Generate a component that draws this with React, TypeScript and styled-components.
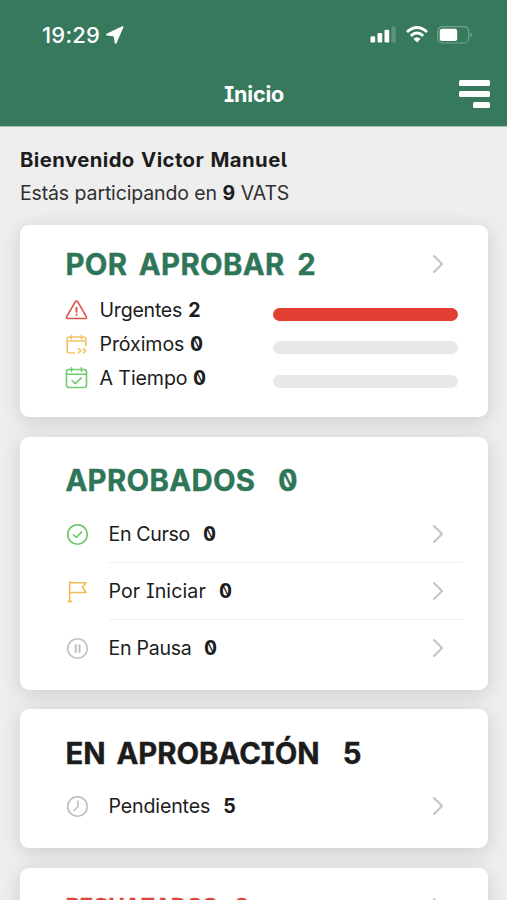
import React from 'react';
import styled, { createGlobalStyle } from 'styled-components';

const GlobalStyle = createGlobalStyle`
  * { box-sizing: border-box; }
  html, body { margin: 0; padding: 0; overflow: hidden; }
  body {
    background: #eeeeee;
    color: #1c1c1c;
    font-family: Inter, "Liberation Sans", sans-serif;
    -webkit-font-smoothing: antialiased;
  }
  svg { display: block; flex: none; }
`;

const Screen = styled.div`
  width: 507px;
  height: 900px;
  overflow: hidden;
  background: #eeeeee;
`;

const Header = styled.header`
  height: 127px;
  background: #37795c;
  color: #fff;
  border-bottom: 1px solid #a9c1b5;
`;

const StatusBar = styled.div`
  height: 68px;
  padding: 0 34px 0 42px;
  display: flex;
  align-items: center;
  justify-content: space-between;
`;

const Clock = styled.div`
  display: flex;
  align-items: center;
  gap: 6px;
  font-size: 22px;
  font-weight: 500;
  line-height: 24px;
  letter-spacing: 0.2px;
  padding-top: 1px;
`;

const Signals = styled.div`
  display: flex;
  align-items: center;
  gap: 9.5px;
  padding-top: 1px;
`;

const NavBar = styled.div`
  height: 58px;
  padding: 0 17px 7px 18px;
  display: grid;
  grid-template-columns: 1fr auto 1fr;
  align-items: center;
`;

const NavTitle = styled.h1`
  grid-column: 2;
  margin: 0;
  font-size: 21.5px;
  line-height: 26px;
  font-weight: 700;
  letter-spacing: -0.15px;
  font-feature-settings: "ss02";
`;

const MenuButton = styled.button`
  justify-self: end;
  padding: 1px 0 0;
  border: 0;
  background: none;
  display: flex;
  flex-direction: column;
  align-items: flex-end;
  gap: 5.4px;
`;

const MenuLine = styled.span<{ $w: number }>`
  width: ${(p) => p.$w}px;
  height: 5.6px;
  border-radius: 1.5px;
  background: #fff;
`;

const Content = styled.main`
  padding: 20px 19.5px 0 20px;
`;

const Greeting = styled.p<{ $bold?: boolean; $track: number; $word: number }>`
  margin: 0;
  padding-top: ${(p) => (p.$bold ? 0 : 1)}px;
  height: ${(p) => (p.$bold ? 32 : 46)}px;
  font-size: ${(p) => (p.$bold ? 20.3 : 19.5)}px;
  line-height: 26px;
  font-weight: ${(p) => (p.$bold ? 700 : 400)};
  letter-spacing: ${(p) => p.$track}px;
  word-spacing: ${(p) => p.$word}px;
  white-space: nowrap;
  font-feature-settings: "ss02";
  color: ${(p) => (p.$bold ? '#1c1c1c' : '#303030')};
  b { color: #1c1c1c; }
`;

const Cards = styled.div`
  display: flex;
  flex-direction: column;
  gap: 19.5px;
`;

const Card = styled.section<{ $h: number; $top: number }>`
  height: ${(p) => p.$h}px;
  padding: ${(p) => p.$top}px 25.5px 0 45px;
  border-radius: 9px;
  background: #fff;
  box-shadow: 0 4px 20px rgba(0, 0, 0, 0.14);
`;

const CardHead = styled.div`
  height: 36px;
  padding-right: 18px;
  display: flex;
  align-items: center;
`;

const CardTitle = styled.h2<{ $color: string; $track: number; $gap: number; $size?: number }>`
  margin: 0 auto 0 0.4px;
  padding-top: 1px;
  display: flex;
  gap: ${(p) => p.$gap}px;
  font-size: ${(p) => p.$size ?? 29.3}px;
  line-height: 36px;
  font-weight: 700;
  letter-spacing: ${(p) => p.$track}px;
  word-spacing: 4px;
  white-space: nowrap;
  color: ${(p) => p.$color};
  -webkit-text-stroke: 0.4px ${(p) => p.$color};
  font-feature-settings: "ss02";
`;

const Meter = styled.div`
  height: 33.8px;
  display: flex;
  align-items: center;
`;

const Meters = styled.div`
  padding-top: 11.5px;
  padding-right: 4px;
`;

const Label = styled.span<{ $left: number; $gap: number; $track: number }>`
  margin-left: ${(p) => p.$left}px;
  margin-right: auto;
  display: flex;
  gap: ${(p) => p.$gap}px;
  font-size: 19.6px;
  line-height: 26px;
  letter-spacing: ${(p) => p.$track}px;
  white-space: nowrap;
  font-feature-settings: "ss02";
  b { letter-spacing: 0; }
`;

const Zero = styled.b`
  display: inline-block;
  font-weight: 700;
  letter-spacing: 0;
  transform: scaleX(-0.98);
  transform-origin: center;
  font-feature-settings: "zero";
`;

const Track = styled.div`
  width: 185.5px;
  height: 13px;
  margin-top: 7.5px;
  border-radius: 7px;
  overflow: hidden;
  background: #e8e8e8;
`;

const Fill = styled.div`
  height: 100%;
  background: #e23f32;
`;

const List = styled.div`
  padding-top: 7px;
  display: flex;
  flex-direction: column;
`;

const Row = styled.div`
  height: 57px;
  padding-left: 1px;
  display: flex;
  align-items: center;
`;

const RowBody = styled.div<{ $line?: boolean }>`
  height: 57px;
  flex: 1;
  margin-left: 19.5px;
  padding-right: 18px;
  display: flex;
  align-items: center;
  border-bottom: 1.5px solid ${(p) => (p.$line ? '#efefef' : 'transparent')};
`;

const Chevron = () => (
  <svg width="12" height="20" viewBox="0 0 12 20" fill="none" stroke="#c4c4c4" strokeWidth="2" strokeLinecap="round" strokeLinejoin="round">
    <path d="M2 2L10 10L2 18" />
  </svg>
);

type IconName = 'alert' | 'next' | 'ontime' | 'check' | 'flag' | 'pause' | 'clock';

const iconColors: Record<IconName, string> = {
  alert: '#df5148',
  next: '#f3c365',
  ontime: '#72cb70',
  check: '#6cc667',
  flag: '#f0bd52',
  pause: '#c2c2c2',
  clock: '#bdbdbd',
};

const iconShapes: Record<IconName, React.ReactNode> = {
  alert: (
    <>
      <path d="M11 1.6Q11.8 1.6 12.3 2.4L20.8 17.2Q21.6 19 20 19H2Q.4 19 1.2 17.2L9.7 2.4Q10.2 1.6 11 1.6Z" />
      <path d="M11 8.3V12.4M11 15.2V15.5" strokeWidth="1.9" />
    </>
  ),
  next: (
    <>
      <path d="M9 19.5H4Q1.7 19.5 1.7 17V5.5Q1.7 3.5 4 3.5H18Q20.3 3.5 20.3 5.5V12M2 7.5H20M6 1.8V5.5M16 1.8V5.5" />
      <path d="M13 15L15.3 17.2L13 19.4M17.8 15L20.1 17.2L17.8 19.4" />
    </>
  ),
  ontime: (
    <>
      <rect x="1" y="3" width="20" height="18" rx="2.5" />
      <path d="M1 7.8H21M6 1.2V5M16 1.2V5M6.5 14L9.7 17.2L15.8 11.3" />
    </>
  ),
  check: (
    <>
      <circle cx="11" cy="11" r="9.8" />
      <path d="M7 11.2L9.8 14L15 8.6" />
    </>
  ),
  flag: <path d="M3.2 1.2V20.5M1.6 20.9H5M3.5 2.2H19.5L16 6.8L19.5 12H3.5" />,
  pause: (
    <>
      <circle cx="11" cy="11" r="9.8" />
      <path d="M9.2 7.6V14.4M13 7.6V14.4" strokeWidth="2" />
    </>
  ),
  clock: (
    <>
      <circle cx="11" cy="11" r="9.8" />
      <path d="M11.5 5.5V11L7.8 14.7" />
    </>
  ),
};

const Icon = ({ name }: { name: IconName }) => (
  <svg width="23" height="23" viewBox="-0.5 -0.5 23 23" fill="none" stroke={iconColors[name]} strokeWidth="1.6" strokeLinecap="round" strokeLinejoin="round">
    {iconShapes[name]}
  </svg>
);

const Count = ({ n }: { n: number }) => (n === 0 ? <Zero>0</Zero> : <b>{n}</b>);

const meters: { icon: IconName; label: string; n: number; pct: number; track: number; gap: number }[] = [
  { icon: 'alert', label: 'Urgentes', n: 2, pct: 100, track: -0.25, gap: 6 },
  { icon: 'next', label: 'Próximos', n: 0, pct: 0, track: -0.1, gap: 5.5 },
  { icon: 'ontime', label: 'A Tiempo', n: 0, pct: 0, track: -0.1, gap: 5.5 },
];

const approved: { icon: IconName; label: string; track: number }[] = [
  { icon: 'check', label: 'En Curso', track: -0.35 },
  { icon: 'flag', label: 'Por Iniciar', track: 0.1 },
  { icon: 'pause', label: 'En Pausa', track: -0.3 },
];

const green = '#2f7659';

export default function App() {
  return (
    <>
      <GlobalStyle />
      <Screen>
        <Header>
          <StatusBar>
            <Clock>
              19:29
              <svg width="18" height="18" viewBox="0 0 18 18" fill="#fff" stroke="#fff" strokeWidth="1.8" strokeLinejoin="round">
                <path d="M16.6 1L1 8.6L8.4 9.7L9.7 16.8Z" />
              </svg>
            </Clock>
            <Signals>
              <svg width="26" height="17" viewBox="0 0 26 17" fill="#fff">
                <rect x="0.5" y="10.3" width="4.7" height="6.2" rx="1.3" />
                <rect x="7.5" y="7" width="4.7" height="9.5" rx="1.3" />
                <rect x="14.5" y="3.8" width="4.7" height="12.7" rx="1.3" />
                <rect x="21.5" y="0.5" width="4.2" height="16" rx="1.3" opacity=".2" />
              </svg>
              <svg width="22" height="17" viewBox="0 0 22 17" fill="none" stroke="#fff" strokeWidth="2.9">
                <path d="M1 6Q11 -2.8 21 6M4.8 9.8Q11 4.4 17.2 9.8" />
                <path d="M11 16.5L7.3 12.8Q11 9.7 14.7 12.8Z" fill="#fff" stroke="none" />
              </svg>
              <svg width="36" height="18" viewBox="0 0 36 18">
                <rect x=".7" y=".7" width="31" height="16.3" rx="4.5" fill="none" stroke="#75a28e" strokeWidth="1.2" />
                <rect x="2.7" y="2.8" width="17.5" height="12.2" rx="2.5" fill="#fff" />
                <path d="M33.5 6.5Q36.3 9 33.5 11.5Z" fill="#86ae9c" />
              </svg>
            </Signals>
          </StatusBar>
          <NavBar>
            <NavTitle>Inicio</NavTitle>
            <MenuButton aria-label="Menú">
              <MenuLine $w={31.5} />
              <MenuLine $w={31.5} />
              <MenuLine $w={17} />
            </MenuButton>
          </NavBar>
        </Header>
        <Content>
          <Greeting $bold $track={0.42} $word={1.2}>Bienvenido Victor Manuel</Greeting>
          <Greeting $track={-0.15} $word={0.3}>
            Estás participando en <b>9</b> VATS
          </Greeting>
          <Cards>
            <Card $h={192} $top={21}>
              <CardHead>
                <CardTitle $color={green} $track={0.4} $gap={12.5}>
                  <span>POR APROBAR</span>
                  <span>2</span>
                </CardTitle>
                <Chevron />
              </CardHead>
              <Meters>
                {meters.map((m) => (
                  <Meter key={m.label}>
                    <Icon name={m.icon} />
                    <Label $left={11.5} $gap={m.gap} $track={m.track}>
                      <span>{m.label}</span>
                      <Count n={m.n} />
                    </Label>
                    <Track>
                      <Fill style={{ width: `${m.pct}%` }} />
                    </Track>
                  </Meter>
                ))}
              </Meters>
            </Card>
            <Card $h={253} $top={26}>
              <CardHead>
                <CardTitle $color={green} $track={0.35} $gap={22.5}>
                  <span>APROBADOS</span>
                  <Zero>0</Zero>
                </CardTitle>
              </CardHead>
              <List>
                {approved.map((r, i) => (
                  <Row key={r.label}>
                    <Icon name={r.icon} />
                    <RowBody $line={i < 2}>
                      <Label $left={0} $gap={13} $track={r.track}>
                        <span>{r.label}</span>
                        <Count n={0} />
                      </Label>
                      <Chevron />
                    </RowBody>
                  </Row>
                ))}
              </List>
            </Card>
            <Card $h={139} $top={26}>
              <CardHead>
                <CardTitle $color="#1c1c1c" $track={0} $gap={23}>
                  <span>EN APROBACIÓN</span>
                  <span>5</span>
                </CardTitle>
              </CardHead>
              <List>
                <Row>
                  <Icon name="clock" />
                  <RowBody>
                    <Label $left={0} $gap={13} $track={-0.15}>
                      <span>Pendientes</span>
                      <Count n={5} />
                    </Label>
                    <Chevron />
                  </RowBody>
                </Row>
              </List>
            </Card>
            <Card $h={139} $top={21}>
              <CardHead>
                <CardTitle $color="#dc453a" $track={-0.6} $gap={18} $size={22.3}>
                  <span>RECHAZADOS</span>
                  <span>2</span>
                </CardTitle>
                <Chevron />
              </CardHead>
            </Card>
          </Cards>
        </Content>
      </Screen>
    </>
  );
}
